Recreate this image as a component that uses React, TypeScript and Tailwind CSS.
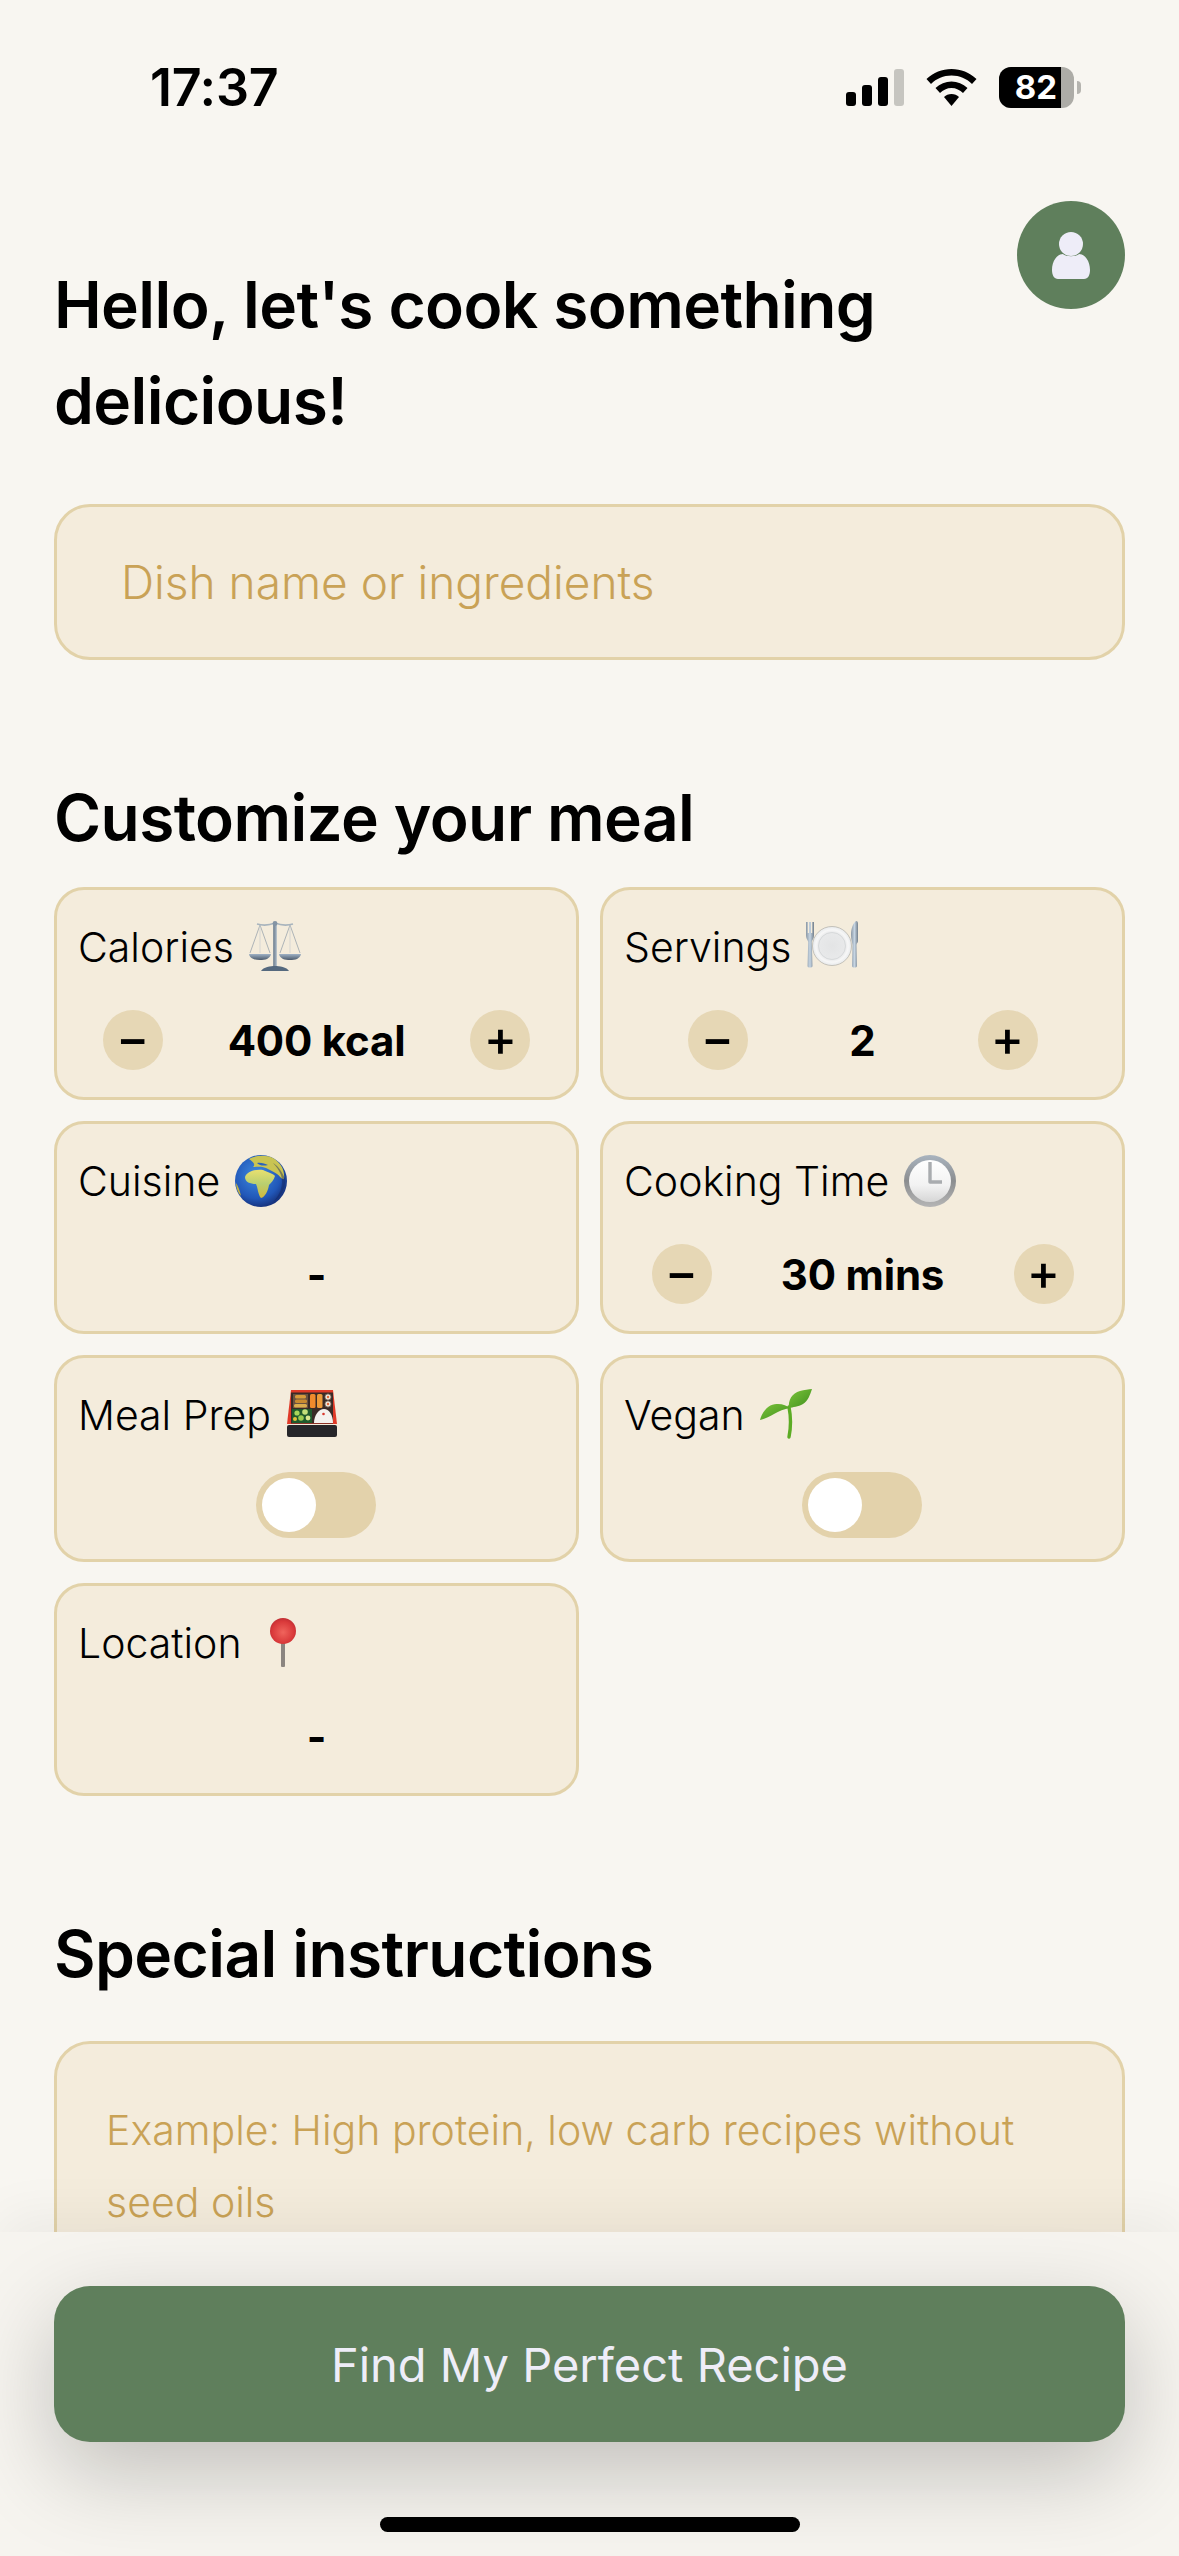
import React from 'react';

const Scale = () => (
  <svg width="52" height="52" viewBox="0 0 52 52">
    <defs>
      <linearGradient id="pan" x1="0" y1="0" x2="0" y2="1">
        <stop offset="0" stopColor="#9fb2c6" />
        <stop offset="1" stopColor="#4b5a6c" />
      </linearGradient>
      <linearGradient id="post" x1="0" y1="0" x2="1" y2="0">
        <stop offset="0" stopColor="#6b7b8c" />
        <stop offset="1" stopColor="#a9b8c6" />
      </linearGradient>
    </defs>
    <path d="M8 3C15 5 21 4 26 2C31 4 37 5 44 3" stroke="#a8b4bd" strokeWidth="1.6" fill="none" />
    <path d="M11 4L1 32M11 4L21 32M41 4L31 32M41 4L51 32" stroke="#9aa5ad" strokeWidth="0.8" fill="none" />
    <path d="M11 4V32M41 4V32" stroke="#c9ced0" strokeWidth="0.7" fill="none" />
    <path d="M0 33H22C21 38 16 39 11 39C6 39 1 38 0 33Z" fill="url(#pan)" />
    <path d="M30 33H52C51 38 46 39 41 39C36 39 31 38 30 33Z" fill="url(#pan)" />
    <rect x="24.2" y="1" width="3.6" height="45" fill="url(#post)" />
    <circle cx="26" cy="2.5" r="2.4" fill="#8494a4" />
    <path d="M12 50C14 46 22 45 26 45C30 45 38 46 40 50Z" fill="#55697e" />
  </svg>
);

const Plate = () => (
  <svg width="52" height="52" viewBox="0 0 52 52">
    <defs>
      <radialGradient id="dish" cx="0.5" cy="0.5" r="0.55">
        <stop offset="0" stopColor="#e3e4e5" />
        <stop offset="0.62" stopColor="#e8e9ea" />
        <stop offset="0.75" stopColor="#f7f7f7" />
        <stop offset="1" stopColor="#dfe3e6" />
      </radialGradient>
      <linearGradient id="steel" x1="0" y1="0" x2="1" y2="0">
        <stop offset="0" stopColor="#8b98a5" />
        <stop offset="0.5" stopColor="#c5d4e2" />
        <stop offset="1" stopColor="#737f8b" />
      </linearGradient>
    </defs>
    <path d="M0 1H1.8V12H3V1H5V12H6.2V1H8V14C8 18 6 19 5.8 21L6.5 45C6.5 47 1.5 47 1.5 45L2.2 21C2 19 0 18 0 14Z" fill="url(#steel)" />
    <circle cx="26" cy="25" r="19.5" fill="url(#dish)" stroke="#b9b6ae" strokeWidth="0.8" />
    <circle cx="26" cy="25" r="13.5" fill="none" stroke="#cfd1d3" strokeWidth="0.7" />
    <path d="M50 0C52 0 52 2 52 4V20C52 22 50.5 22 50.5 24L51 45C51 47 46 47 46 45L46.5 24C46 20 45 18 45 14C45 8 47 2 50 0Z" fill="url(#steel)" />
  </svg>
);

const Globe = () => (
  <svg width="52" height="52" viewBox="0 0 52 52">
    <defs>
      <radialGradient id="sea" cx="0.42" cy="0.38" r="0.65">
        <stop offset="0" stopColor="#3f8be0" />
        <stop offset="0.7" stopColor="#2157b8" />
        <stop offset="1" stopColor="#152f78" />
      </radialGradient>
      <linearGradient id="land" x1="0" y1="0" x2="0" y2="1">
        <stop offset="0" stopColor="#e9e06f" />
        <stop offset="0.5" stopColor="#b9cf70" />
        <stop offset="1" stopColor="#d2b83a" />
      </linearGradient>
    </defs>
    <circle cx="26" cy="26" r="26" fill="url(#sea)" />
    <path d="M10 22C12 16 21 14 28 15C32 17 39 19 40 21C39 25 36 28 34 30C33 36 30 42 26 43C23 40 23 33 21 29C15 29 10 27 10 22Z" fill="url(#land)" />
    <path d="M14 4C20 0 32 0 38 3C46 8 50 15 49 24C47 25 45 21 42 19C39 17 35 15 31 13C26 11 22 12 18 12C21 9 18 7 14 4Z" fill="#c9c452" />
    <path d="M1 28C3 31 5 36 6 41C3 38 1 33 1 28Z" fill="#c3b444" />
    <path d="M22 8C26 7 30 9 33 10C29 11 25 11 22 8Z" fill="#2a63bd" />
    <path d="M38 8C42 10 47 16 50 24C51 34 45 43 38 47C45 40 49 30 46 20C44 15 41 11 38 8Z" fill="#13265f" opacity="0.45" />
  </svg>
);

const Clock = () => (
  <svg width="52" height="52" viewBox="0 0 52 52">
    <defs>
      <linearGradient id="rim" x1="0" y1="0" x2="0" y2="1">
        <stop offset="0" stopColor="#a9b4bf" />
        <stop offset="0.5" stopColor="#8b8d8f" />
        <stop offset="1" stopColor="#b5b5b5" />
      </linearGradient>
      <linearGradient id="face" x1="0" y1="0" x2="0" y2="1">
        <stop offset="0" stopColor="#ffffff" />
        <stop offset="0.6" stopColor="#f2f2f2" />
        <stop offset="1" stopColor="#d6d6d6" />
      </linearGradient>
    </defs>
    <circle cx="26" cy="26" r="26" fill="url(#rim)" />
    <circle cx="26" cy="26" r="21" fill="url(#face)" />
    <path d="M26 7V27H38" fill="none" stroke="#a9acaf" strokeWidth="3.4" strokeLinejoin="round" />
  </svg>
);

const Bento = () => (
  <svg width="52" height="52" viewBox="0 0 52 52">
    <rect x="1" y="36" width="50" height="12" rx="2" fill="#26262a" />
    <path d="M5 1H47L51 35H1Z" fill="#e03a28" />
    <rect x="5" y="3.5" width="42" height="31" fill="#3a2a26" />
    <rect x="7" y="5" width="15" height="14" fill="#6a5240" />
    <rect x="9" y="6" width="11" height="3.6" rx="1.5" fill="#d79b3a" />
    <rect x="9" y="10.5" width="12" height="3.6" rx="1.5" fill="#c98b30" />
    <rect x="8" y="15" width="13" height="3.4" rx="1.5" fill="#dcae4e" />
    <rect x="24" y="5" width="5.5" height="14" rx="1.5" fill="#f08a2c" />
    <rect x="31" y="5" width="5.5" height="14" rx="1.5" fill="#ee9a38" />
    <circle cx="42" cy="8" r="3.2" fill="#efe6d8" stroke="#4d3c32" strokeWidth="0.8" />
    <circle cx="42" cy="15" r="3.2" fill="#efe6d8" stroke="#4d3c32" strokeWidth="0.8" />
    <circle cx="42" cy="8" r="1.2" fill="#e2683a" />
    <circle cx="42" cy="15" r="1.2" fill="#e2683a" />
    <rect x="6" y="20" width="20" height="14" fill="#1f5a2c" />
    <circle cx="11" cy="24" r="2.6" fill="#a8d65a" />
    <circle cx="19" cy="23" r="2.8" fill="#c2e07a" />
    <circle cx="15" cy="29" r="2.8" fill="#9ccc50" />
    <circle cx="22" cy="29" r="2.4" fill="#d8e88e" />
    <circle cx="9" cy="30" r="2" fill="#e3c23c" />
    <path d="M28 34C28 26 33 20 38 20C43 20 47 26 47 34Z" fill="#f4f1ee" />
    <circle cx="37.5" cy="25" r="1.3" fill="#d9392e" />
  </svg>
);

const Sprout = () => (
  <svg width="52" height="52" viewBox="0 0 52 52">
    <defs>
      <linearGradient id="leaf" x1="0" y1="0" x2="1" y2="1">
        <stop offset="0" stopColor="#7cc43a" />
        <stop offset="1" stopColor="#3f8f1e" />
      </linearGradient>
    </defs>
    <path d="M29 18C31 28 31 38 29 48" stroke="#5cac24" strokeWidth="3.4" fill="none" strokeLinecap="round" />
    <path d="M0 31C3 20 11 14 18 15C23 15 27 17 30 19C24 20 19 22 14 25C9 28 4 30 0 31Z" fill="url(#leaf)" />
    <path d="M29 19C28 11 32 4 40 2C44 1 49 0 52 0C50 6 48 12 43 15C38 18 33 18 29 19Z" fill="url(#leaf)" />
  </svg>
);

const Pin = () => (
  <svg width="52" height="52" viewBox="0 0 52 52">
    <defs>
      <radialGradient id="ball" cx="0.5" cy="0.55" r="0.6">
        <stop offset="0" stopColor="#f0645c" />
        <stop offset="0.7" stopColor="#d9393a" />
        <stop offset="1" stopColor="#b82a30" />
      </radialGradient>
    </defs>
    <rect x="24" y="24" width="4" height="26" rx="1" fill="#8b8580" />
    <circle cx="26" cy="14" r="13" fill="url(#ball)" />
  </svg>
);

const Toggle = () => (
  <div className="flex justify-center pr-[1px]">
    <div className="flex h-[66px] w-[120px] items-center rounded-full bg-[#e3d2ab] p-[6px]">
      <div className="h-[54px] w-[54px] rounded-full bg-white" />
    </div>
  </div>
);

const RoundBtn = ({ label }: { label: string }) => (
  <div className="flex h-[60px] w-[60px] items-center justify-center rounded-full bg-[#e6d7b5] pb-[5px] text-[50px] font-medium leading-none text-black">
    {label}
  </div>
);

const Stepper = ({ value, wide }: { value: string; wide?: boolean }) => (
  <div className="flex h-[72px] items-center justify-center gap-[65px]">
    <RoundBtn label="−" />
    <span className={wide ? 'min-w-[172px] text-center text-[42px] font-bold tracking-[-0.2px] text-black' : 'min-w-[100px] text-center text-[42px] font-bold tracking-[-0.2px] text-black'}>
      {value}
    </span>
    <RoundBtn label="+" />
  </div>
);

const Dash = () => (
  <div className="flex h-[72px] items-center justify-center text-[42px] font-bold text-black">-</div>
);

const Card = ({ label, icon, children }: { label: string; icon: React.ReactNode; children: React.ReactNode }) => (
  <div className="rounded-[30px] border-[3px] border-[#e2d2a9] bg-[#f4ecdc] px-[21px] pt-[27px] pb-[21px]">
    <div className="mb-[27px] flex h-[60px] items-center gap-[15px] text-[41px] font-light text-black">
      <span className="pt-[2px]">{label}</span>
      {icon}
    </div>
    {children}
  </div>
);

const App: React.FC = () => {
  return (
    <div className="relative h-[2556px] w-[1179px] overflow-hidden bg-[#f8f6f1] font-['Inter',sans-serif] text-black">
      {/* status bar */}
      <div className="flex h-[174px] items-start justify-between pt-[58px] pr-[98px] pl-[150px]">
        <span className="text-[52px] leading-[60px] font-semibold tracking-[-0.3px]">17:37</span>
        <div className="flex items-center pt-[9px]">
          <svg width="58" height="37" viewBox="0 0 58 37">
            <rect x="0" y="23" width="10" height="14" rx="3" fill="#000" />
            <rect x="16" y="16" width="10" height="21" rx="3" fill="#000" />
            <rect x="32" y="8" width="10" height="29" rx="3" fill="#000" />
            <rect x="48" y="0" width="10" height="37" rx="3" fill="#c6c5c0" />
          </svg>
          <svg className="ml-[22px]" width="51" height="37" viewBox="0 0 51 37">
            <path d="M25.5 0C16 0 7.5 3.5 0.5 10L5 15C10.5 9.5 17.5 6.5 25.5 6.5C33.5 6.5 40.5 9.5 46 15L50.5 10C43.5 3.5 35 0 25.5 0Z" fill="#000" />
            <path d="M25.5 12.5C19.5 12.5 14 14.8 9.5 19L14 24C17 21 21 19 25.5 19C30 19 34 21 37 24L41.5 19C37 14.8 31.5 12.5 25.5 12.5Z" fill="#000" />
            <path d="M25.5 25C22.5 25 20 26 18 28L25.5 37L33 28C31 26 28.5 25 25.5 25Z" fill="#000" />
          </svg>
          <div className="ml-[22px] flex h-[41px] w-[75px] overflow-hidden rounded-[12px] bg-[#adaca7]">
            <div className="flex h-full w-[62px] items-center justify-center bg-black pl-[12px] text-[33px] leading-none font-bold text-white">
              82
            </div>
          </div>
          <div className="ml-[3px] h-[13px] w-[4px] rounded-r-full bg-[#b5b4af]" />
        </div>
      </div>

      <div className="absolute top-[201px] right-[54px] flex h-[108px] w-[108px] items-center justify-center rounded-full bg-[#5f7f5c]">
        <svg width="40" height="47" viewBox="0 0 40 47">
          <circle cx="20" cy="12" r="12" fill="#eeedf8" />
          <path d="M1 38C1 29 6 22 12 22C15 25 25 25 28 22C34 22 39 29 39 38C39 43 37 47 33 47H7C3 47 1 43 1 38Z" fill="#eeedf8" />
        </svg>
      </div>

      <div className="px-[54px] pt-[83px]">
        <h1 className="w-[900px] text-[64px] leading-[96px] font-semibold tracking-[-0.6px]">
          Hello, let's cook something delicious!
        </h1>

        <div className="mt-[55px] flex h-[156px] items-center rounded-[36px] border-[3px] border-[#e2d2a9] bg-[#f4ecdc] pl-[64px] text-[46px] font-light text-[#c9a256]">
          Dish name or ingredients
        </div>

        <h2 className="mt-[110px] text-[64px] leading-[96px] font-semibold tracking-[-0.6px]">Customize your meal</h2>

        <div className="mt-[21px] grid grid-cols-2 gap-x-[21px] gap-y-[21px]">
          <Card label="Calories" icon={<Scale />}>
            <Stepper value="400 kcal" />
          </Card>
          <Card label="Servings" icon={<Plate />}>
            <Stepper value="2" />
          </Card>
          <Card label="Cuisine" icon={<Globe />}>
            <Dash />
          </Card>
          <Card label="Cooking Time" icon={<Clock />}>
            <Stepper value="30 mins" wide />
          </Card>
          <Card label="Meal Prep" icon={<Bento />}>
            <Toggle />
          </Card>
          <Card label="Vegan" icon={<Sprout />}>
            <Toggle />
          </Card>
          <Card label="Location" icon={<Pin />}>
            <Dash />
          </Card>
        </div>

        <h2 className="mt-[110px] text-[64px] leading-[96px] font-semibold tracking-[-0.6px]">Special instructions</h2>

        <div className="mt-[39px] h-[300px] rounded-[36px] border-[3px] border-[#e2d2a9] bg-[#f4ecdc] px-[49px] pt-[50px] text-[41px] leading-[72px] font-light text-[#c9a256]">
          Example: High protein, low carb recipes without seed oils
        </div>
      </div>

      {/* sticky footer */}
      <div className="absolute right-0 bottom-0 left-0 flex h-[324px] flex-col items-center bg-[#f6f4ef] px-[54px] pt-[54px] shadow-[0_-16px_50px_rgba(0,0,0,0.05)]">
        <div className="flex h-[156px] w-full items-center justify-center rounded-[36px] bg-[#5f7f5c] pt-[2px] text-[47px] font-normal text-[#eeedf8] shadow-[0_30px_90px_rgba(0,0,0,0.22)]">
          Find My Perfect Recipe
        </div>
        <div className="mt-[75px] h-[15px] w-[420px] rounded-full bg-black" />
      </div>
    </div>
  );
};

export default App;
